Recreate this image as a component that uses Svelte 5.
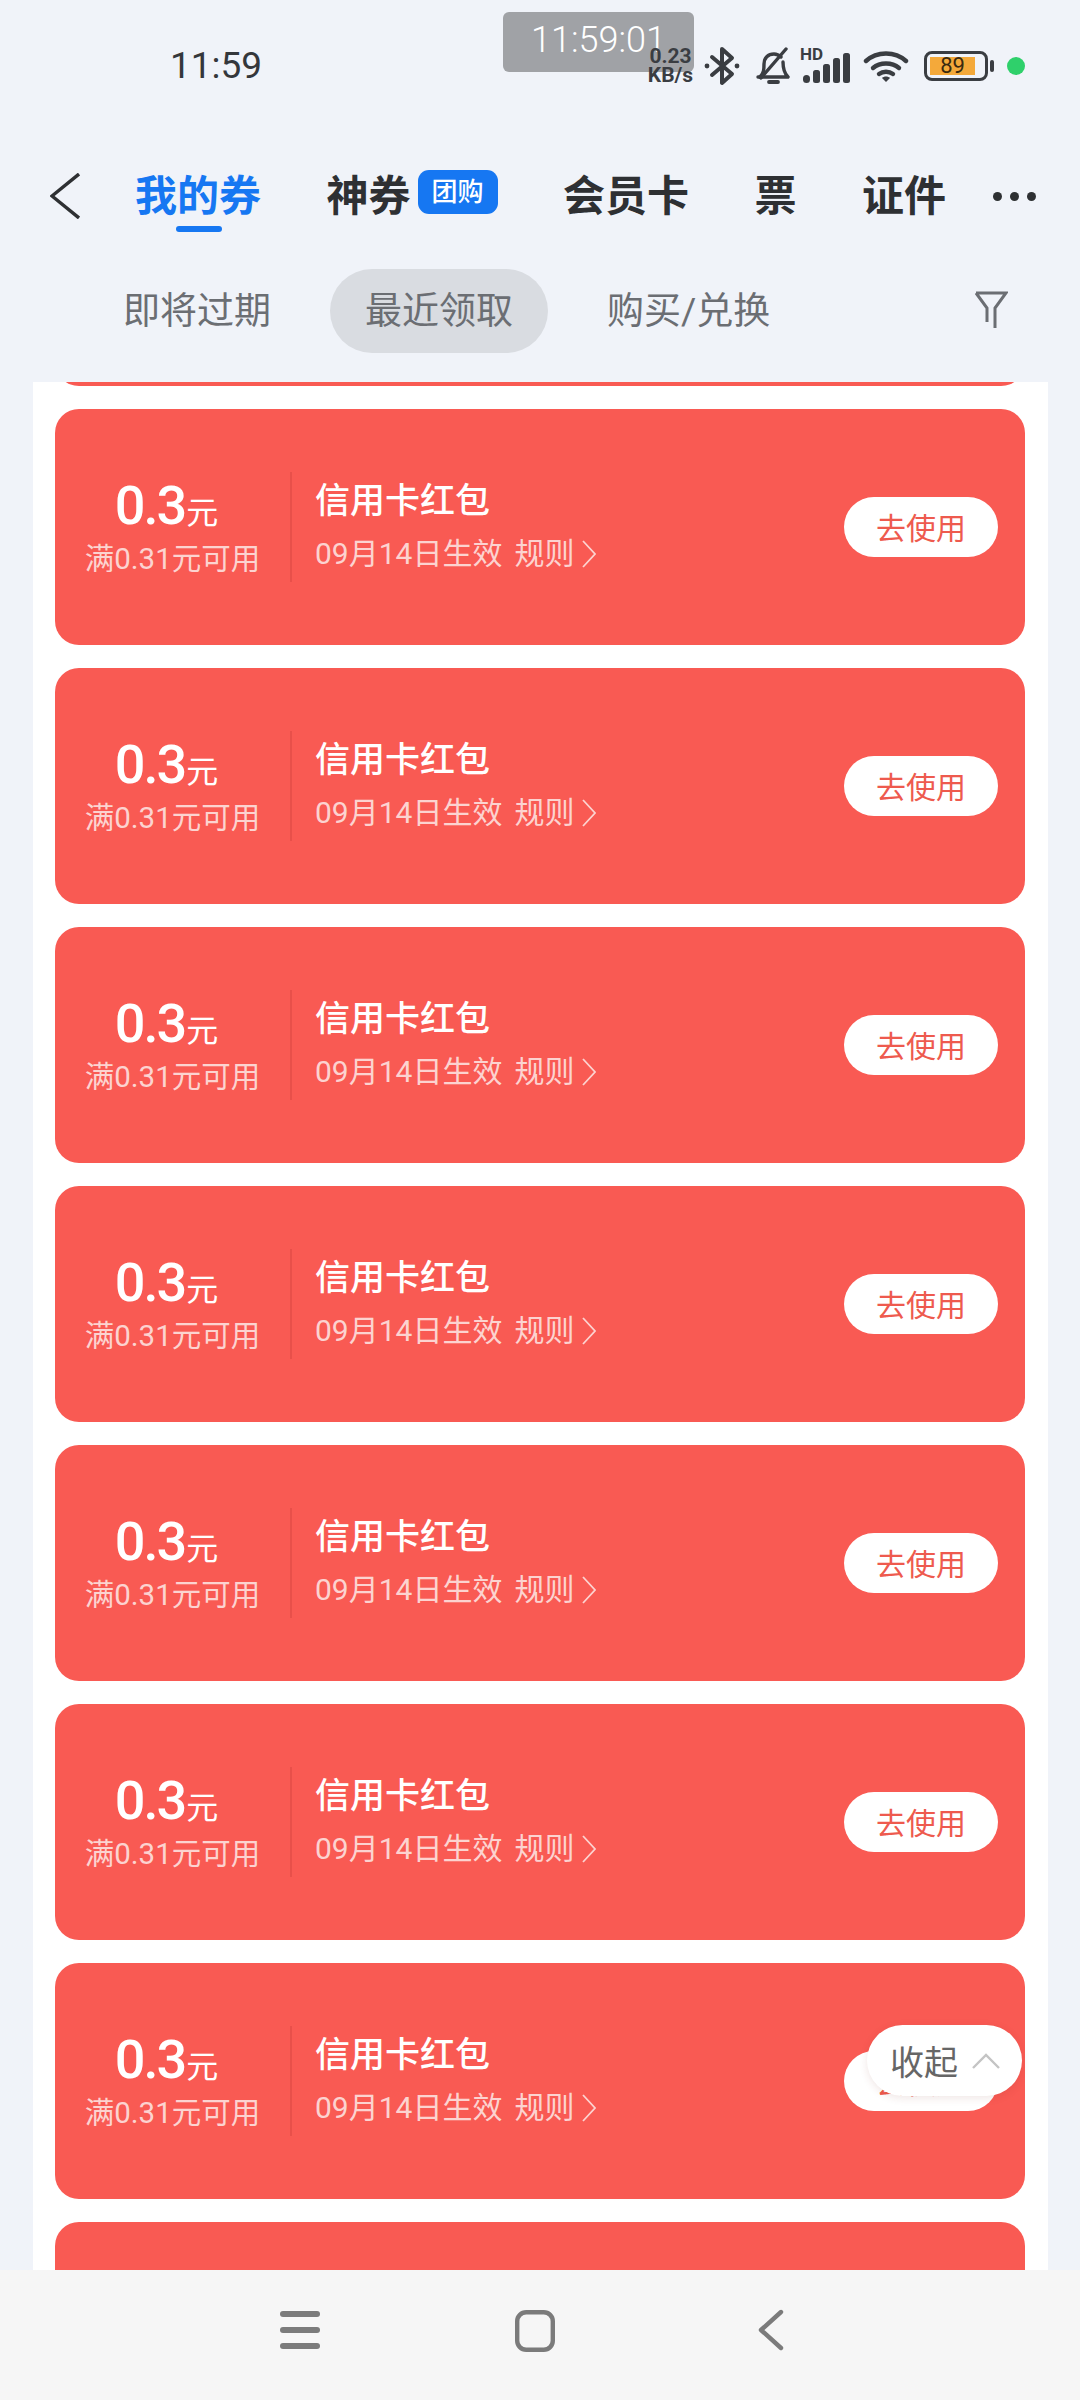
<script>
  const tabs = [
    { label: '我的券', active: true },
    { label: '神券', badge: '团购' },
    { label: '会员卡' },
    { label: '票' },
    { label: '证件' }
  ];
  const filters = ['即将过期', '最近领取', '购买/兑换'];
  // first and last only peek out of the scroll area, so they show no content
  const coupons = Array.from({ length: 9 }, (_, i) => ({
    peek: i === 0 || i === 8,
    amount: '0.3',
    limit: '满0.31元可用',
    name: '信用卡红包',
    date: '09月14日生效'
  }));
</script>

<div class="page">
  <div class="timer">11:59:01</div>

  <header class="status">
    <span class="clock">11:59</span>
    <div class="status-right">
      <span class="speed"><b>0.23</b><b>KB/s</b></span>
      <svg class="bt" viewBox="0 0 36 40" fill="none" stroke="#3a3d42" stroke-width="4" stroke-linejoin="round" stroke-linecap="round">
        <path d="M8 11 28 28 18 37V3l10 9L8 29" />
        <circle cx="3" cy="20" r="2.4" fill="#3a3d42" stroke="none" />
        <circle cx="33" cy="20" r="2.4" fill="#3a3d42" stroke="none" />
      </svg>
      <svg class="bell" viewBox="0 0 36 38" fill="none" stroke="#3a3d42" stroke-width="3.4" stroke-linecap="round" stroke-linejoin="round">
        <path d="M5 30c4-4 4-8 4-13 0-6 4-10 10-10 3 0 5 1 7 3" />
        <path d="M28 15c0 6 1 11 5 15H3" />
        <path d="M31 2 6 31" />
        <path d="M14 35h9" stroke-width="3.8" />
      </svg>
      <div class="signal">
        <span class="hd">HD</span>
        <svg viewBox="0 0 48 30" fill="#3a3d42">
          <rect x="0" y="22" width="7" height="8" rx="3.5" />
          <rect x="10" y="17" width="7" height="13" rx="2.5" />
          <rect x="20" y="11" width="7" height="19" rx="2.5" />
          <rect x="30" y="5" width="7" height="25" rx="2.5" />
          <rect x="40" y="0" width="7" height="30" rx="2.5" />
        </svg>
      </div>
      <svg class="wifi" viewBox="0 0 46 32" fill="none" stroke="#3a3d42" stroke-width="4.4" stroke-linecap="round">
        <path d="M3 11c11-10 29-10 40 0" />
        <path d="M10 18c7-6 19-6 26 0" />
        <path d="M16 24c4-3 10-3 14 0" />
        <path d="M23 32l-4-4c2-2 6-2 8 0z" fill="#3a3d42" stroke="none" />
      </svg>
      <div class="battery">
        <div class="cell"><span class="level">89</span></div>
        <i class="tip"></i>
      </div>
      <i class="dot"></i>
    </div>
  </header>

  <nav class="tabs">
    <svg class="back" viewBox="0 0 30 46" fill="none" stroke="#2e3033" stroke-width="3.4">
      <path d="M29 1 2 23l27 22" />
    </svg>
    {#each tabs as tab}
      <div class="tab" class:active={tab.active}>
        {tab.label}
        {#if tab.badge}<span class="badge">{tab.badge}</span>{/if}
      </div>
    {/each}
    <div class="more"><i></i><i></i><i></i></div>
  </nav>

  <div class="filters">
    {#each filters as f, i}
      <div class="filter" class:on={i === 1}>{f}</div>
    {/each}
    <svg class="funnel" viewBox="0 0 34 38" fill="none" stroke="#6b6e73" stroke-width="3">
      <path d="M2 2h30L21 17v20M13 31V17L2 2" />
    </svg>
  </div>

  <main class="list">
    <div class="scroller">
      {#each coupons as c}
        <article class="coupon">
          {#if !c.peek}
            <div class="value">
              <div class="amount">{c.amount}<small>元</small></div>
              <div class="limit">{c.limit}</div>
            </div>
            <div class="info">
              <div class="name">{c.name}</div>
              <div class="date">
                {c.date}<span class="rule">规则</span>
                <svg viewBox="0 0 14 28" fill="none" stroke="#fcd3d0" stroke-width="1.8"><path d="M1 1l12 13L1 27" /></svg>
              </div>
            </div>
            <button class="use" type="button">去使用</button>
          {/if}
        </article>
      {/each}
    </div>
  </main>

  <div class="collapse">
    收起
    <svg viewBox="0 0 28 16" fill="none" stroke="#c4c4c4" stroke-width="2.4"><path d="M1 15 14 2l13 13" /></svg>
  </div>

  <footer class="navbar">
    <svg class="menu" viewBox="0 0 40 38" fill="#7b7b7b">
      <rect x="0" y="0" width="40" height="6" rx="3" />
      <rect x="0" y="16" width="40" height="6" rx="3" />
      <rect x="0" y="32" width="40" height="6" rx="3" />
    </svg>
    <svg class="home" viewBox="0 0 40 42" fill="none" stroke="#7b7b7b" stroke-width="4.4">
      <rect x="2.2" y="2.2" width="35.6" height="37.6" rx="9" />
    </svg>
    <svg class="prev" viewBox="0 0 26 42" fill="none" stroke="#7b7b7b" stroke-width="4.4" stroke-linecap="round" stroke-linejoin="round">
      <path d="M23 3 3 21l20 18" />
    </svg>
  </footer>
</div>

<style>
  :global(body) {
    margin: 0;
    background: #f0f3f9;
  }
  .page {
    position: relative;
    width: 1080px;
    height: 2400px;
    overflow: hidden;
    display: flex;
    flex-direction: column;
    background: #f0f3f9;
    font-family: Roboto, "Noto Sans CJK SC", sans-serif;
  }
  .timer {
    position: absolute;
    left: 503px;
    top: 12px;
    width: 191px;
    height: 60px;
    border-radius: 6px;
    background: #a0a2a6;
    color: #fff;
    font-size: 36px;
    font-weight: 300;
    line-height: 56px;
    text-align: center;
  }

  .status {
    height: 132px;
    box-sizing: border-box;
    padding: 44px 0 0 170px;
    display: flex;
    align-items: flex-start;
    position: relative;
  }
  .clock {
    font-size: 37px;
    line-height: 44px;
    color: #34373b;
  }
  .status-right {
    position: absolute;
    left: 647px;
    top: 46px;
    height: 40px;
    display: flex;
    align-items: center;
  }
  .speed {
    width: 47px;
    display: flex;
    flex-direction: column;
    align-items: center;
    font-size: 21px;
    line-height: 19px;
    color: #3a3d42;
  }
  .speed b { font-weight: 700; }
  .bt { width: 36px; height: 40px; margin-left: 10px; }
  .bell { width: 36px; height: 38px; margin-left: 15px; }
  .signal {
    position: relative;
    width: 50px;
    height: 34px;
    margin-left: 9px;
  }
  .signal svg {
    position: absolute;
    left: 3px;
    bottom: 0;
    width: 48px;
    height: 30px;
  }
  .hd {
    position: absolute;
    left: 0;
    top: -3px;
    font-size: 17px;
    line-height: 17px;
    font-weight: 700;
    color: #3a3d42;
  }
  .wifi { width: 46px; height: 32px; margin-left: 13px; }
  .battery {
    display: flex;
    align-items: center;
    margin-left: 15px;
  }
  .cell {
    width: 64px;
    height: 30px;
    box-sizing: border-box;
    border: 3px solid #3a3d42;
    border-radius: 8px;
    padding: 3px;
  }
  .level {
    display: block;
    width: 45px;
    height: 18px;
    background: #f4a93a;
    color: #3a2a10;
    font-size: 22px;
    line-height: 18px;
    text-align: center;
  }
  .tip {
    width: 4px;
    height: 12px;
    margin-left: 2px;
    background: #3a3d42;
    border-radius: 2px;
  }
  .dot {
    width: 18px;
    height: 18px;
    margin-left: 13px;
    border-radius: 50%;
    background: #2fd06b;
  }

  .tabs {
    height: 116px;
    box-sizing: border-box;
    position: relative;
    display: flex;
    align-items: flex-start;
    padding: 28px 0 0 135px;
    gap: 65.5px;
  }
  .back {
    position: absolute;
    left: 50px;
    top: 41px;
    width: 30px;
    height: 46px;
  }
  .tab {
    position: relative;
    display: flex;
    align-items: center;
    height: 64px;
    font-size: 42px;
    font-weight: 700;
    color: #2e3033;
    white-space: nowrap;
  }
  .tab.active { color: #1677f2; }
  .tab.active::after {
    content: "";
    position: absolute;
    left: 41px;
    top: 66px;
    width: 46px;
    height: 6px;
    border-radius: 3px;
    background: #1677f2;
  }
  .badge {
    margin-left: 7px;
    width: 80px;
    height: 44px;
    border-radius: 11px;
    background: #1677f2;
    color: #fff;
    font-size: 26px;
    font-weight: 500;
    line-height: 44px;
    text-align: center;
  }
  .more {
    position: absolute;
    left: 993px;
    top: 60px;
    display: flex;
    gap: 8px;
  }
  .more i {
    width: 9px;
    height: 9px;
    border-radius: 50%;
    background: #2e3033;
  }

  .filters {
    height: 134px;
    position: relative;
    display: flex;
    align-items: flex-start;
    padding: 21px 0 0 88px;
    box-sizing: border-box;
    gap: 24px;
  }
  .filter {
    height: 84px;
    padding: 0 35px;
    border-radius: 42px;
    font-size: 37px;
    line-height: 85px;
    color: #6b6e73;
    white-space: nowrap;
  }
  .filter.on { background: #d9dce1; }
  .funnel {
    position: absolute;
    left: 974px;
    top: 43px;
    width: 34px;
    height: 38px;
  }

  .list {
    flex: 1;
    min-height: 0;
    margin: 0 32px 0 33px;
    background: #fff;
    overflow: hidden;
  }
  .scroller {
    display: flex;
    flex-direction: column;
    gap: 23px;
    padding: 0 23px 0 22px;
    margin-top: -232px;
  }
  .coupon {
    height: 236px;
    flex: none;
    display: flex;
    align-items: flex-start;
    border-radius: 24px;
    background: #f95a53;
    color: #fff;
    position: relative;
  }
  .value {
    width: 235px;
    height: 110px;
    margin-top: 63px;
    border-right: 2px solid #e8504a;
    text-align: center;
  }
  .amount {
    font-size: 54px;
    font-weight: 500;
    line-height: 56px;
    margin-top: 6px;
    letter-spacing: -2px;
    margin-left: -12px;
  }
  .amount small {
    font-size: 32px;
    font-weight: 400;
    letter-spacing: 0;
    margin-left: 1px;
  }
  .limit {
    font-size: 29.5px;
    line-height: 36px;
    color: #fcd3d0;
    white-space: nowrap;
  }
  .info {
    margin: 70px 0 0 23px;
    flex: 1;
  }
  .name {
    font-size: 35px;
    font-weight: 500;
    line-height: 46px;
  }
  .date {
    margin-top: 9px;
    font-size: 30px;
    line-height: 40px;
    color: #fcd3d0;
    display: flex;
    align-items: center;
    white-space: nowrap;
  }
  .rule { margin-left: 12px; }
  .date svg { width: 14px; height: 28px; margin-left: 8px; }
  .use {
    width: 154px;
    height: 60px;
    margin: 88px 27px 0 0;
    padding: 0 0 2px;
    border: 0;
    border-radius: 30px;
    background: #fff;
    color: #ee5a4e;
    font: inherit;
    font-size: 30px;
  }

  .collapse {
    position: absolute;
    left: 867px;
    top: 2025px;
    width: 155px;
    height: 71px;
    box-sizing: border-box;
    padding-left: 23px;
    display: flex;
    align-items: center;
    border-radius: 36px;
    background: #fff;
    color: #666;
    font-size: 34px;
    box-shadow: 0 2px 8px rgba(120, 40, 30, 0.12);
  }
  .collapse svg { width: 28px; height: 16px; margin-left: 14px; }

  .navbar {
    height: 130px;
    flex: none;
    position: relative;
    background: #f6f6f6;
    display: flex;
    align-items: flex-start;
  }
  .menu { width: 40px; height: 38px; margin: 41px 0 0 280px; }
  .home { width: 40px; height: 42px; margin: 40px 0 0 195px; }
  .prev { width: 26px; height: 42px; margin: 39px 0 0 203px; }
</style>
